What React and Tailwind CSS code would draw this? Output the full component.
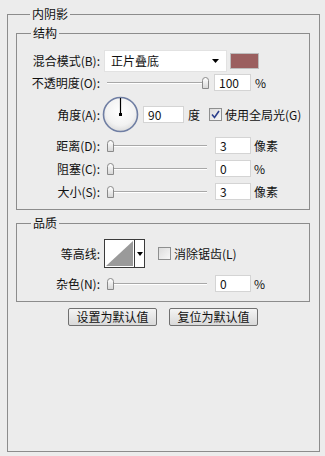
import React from "react";

function Label({ children }) {
  return <div className="w-[83px] shrink-0 text-right leading-[16px]">{children}</div>;
}

function NumBox({ value, w = "w-[37px]" }) {
  return (
    <div className={`${w} h-[17px] shrink-0 bg-white border border-[#d4d4d4] pl-[4px] leading-[15px] text-[12px]`}>
      {value}
    </div>
  );
}

function Slider({ pos }) {
  return (
    <div className="relative w-[104px] h-[14px] shrink-0">
      <div className="absolute left-0 right-[4px] top-[6px] h-[1px] bg-[#a8a8a8]" />
      <div className="absolute left-0 right-[4px] top-[7px] h-[1px] bg-[#ffffff]" />
      <div
        className={`absolute top-[1px] w-[7px] h-[12px] rounded-t-full rounded-b-[1px] border border-[#8a8a8a] bg-gradient-to-b from-[#ffffff] to-[#d8d8d8] ${
          pos === "end" ? "left-[95px]" : "left-0"
        }`}
      />
    </div>
  );
}

function SliderRow({ label, value, unit }) {
  return (
    <div className="flex items-center h-[17px]">
      <Label>{label}</Label>
      <div className="ml-[7px]">
        <Slider pos="start" />
      </div>
      <div className="ml-[4px]">
        <NumBox value={value} w="w-[36px]" />
      </div>
      <div className="ml-[3px] leading-[16px]">{unit}</div>
    </div>
  );
}

function Dial() {
  return (
    <svg width="37" height="37" viewBox="0 0 37 37">
      <defs>
        <radialGradient id="dg" cx="50%" cy="40%" r="60%">
          <stop offset="0%" stopColor="#ffffff" />
          <stop offset="70%" stopColor="#f2f2f2" />
          <stop offset="100%" stopColor="#dcdcdc" />
        </radialGradient>
      </defs>
      <circle cx="18.5" cy="18.5" r="17" fill="url(#dg)" stroke="#6f7ea3" strokeWidth="1.6" />
      <line x1="18.5" y1="2" x2="18.5" y2="18.5" stroke="#000" strokeWidth="1.2" />
      <rect x="17" y="17" width="3" height="3" fill="#000" />
    </svg>
  );
}

function Checkbox({ checked }) {
  return (
    <div className="w-[13px] h-[13px] shrink-0 border border-[#8e8f8f] bg-gradient-to-br from-[#dcdcdc] to-[#f8f8f8] flex items-center justify-center">
      {checked && (
        <svg width="11" height="11" viewBox="0 0 11 11">
          <path d="M2 5.5 L4.5 8.5 L9 2" fill="none" stroke="#2b3f8c" strokeWidth="1.6" />
        </svg>
      )}
    </div>
  );
}

function Contour() {
  return (
    <div className="flex w-[41px] h-[29px] shrink-0 border border-[#3a3a3a] bg-white">
      <svg width="29" height="27" viewBox="0 0 29 27" className="shrink-0">
        <polygon points="1,26 28,1 28,26" fill="#9a9a9a" />
      </svg>
      <div className="w-[1px] bg-[#3a3a3a]" />
      <div className="flex-1 flex items-center justify-center">
        <svg width="6" height="4" viewBox="0 0 6 4">
          <polygon points="0,0 6,0 3,4" fill="#000" />
        </svg>
      </div>
    </div>
  );
}

function Button({ children }) {
  return (
    <div className="w-[89px] h-[18px] rounded-[2px] border border-[#707070] bg-gradient-to-b from-[#f4f4f4] to-[#d9d9d9] flex items-center justify-center text-[12px] leading-[16px]">
      {children}
    </div>
  );
}

export default function App() {
  return (
    <div className="w-[325px] h-[456px] bg-[#ececec] text-[12px] text-[#111] font-['Noto_Sans_CJK_SC',sans-serif] pt-[6px] pl-[7px] overflow-hidden">
      <fieldset className="w-[313px] h-[446px] border border-[#8c8c8c] pl-[8px] pr-[9px]">
        <legend className="ml-[14px] px-[2px] leading-[16px]">内阴影</legend>

        <fieldset className="mt-[3px] w-[294px] h-[185px] border border-[#8c8c8c]">
          <legend className="ml-[14px] px-[2px] leading-[16px]">结构</legend>

          <div className="mt-[9px] flex items-center h-[22px]">
            <Label>混合模式(B):</Label>
            <div className="ml-[4px] w-[123px] h-[22px] bg-white border border-[#e2e2e2] flex items-center pl-[6px] pr-[7px]">
              <span className="flex-1 leading-[16px]">正片叠底</span>
              <svg width="7" height="4" viewBox="0 0 7 4">
                <polygon points="0,0 7,0 3.5,4" fill="#000" />
              </svg>
            </div>
            <div className="ml-[3px] w-[29px] h-[16px] bg-[#9b5f5f] border border-[#bdbdbd]" />
          </div>

          <div className="mt-[2px] flex items-center h-[17px]">
            <Label>不透明度(O):</Label>
            <div className="ml-[7px]">
              <Slider pos="end" />
            </div>
            <div className="ml-[3px]">
              <NumBox value="100" />
            </div>
            <div className="ml-[4px] leading-[16px]">%</div>
          </div>

          <div className="mt-[5px] flex items-center h-[37px]">
            <Label>角度(A):</Label>
            <div className="ml-[2px]">
              <Dial />
            </div>
            <div className="ml-[4px]">
              <NumBox value="90" w="w-[41px]" />
            </div>
            <div className="ml-[4px] leading-[16px]">度</div>
            <div className="ml-[9px]">
              <Checkbox checked />
            </div>
            <div className="ml-[3px] leading-[16px]">使用全局光(G)</div>
          </div>

          <div className="mt-[4px] flex flex-col gap-[6px]">
            <SliderRow label="距离(D):" value="3" unit="像素" />
            <SliderRow label="阻塞(C):" value="0" unit="%" />
            <SliderRow label="大小(S):" value="3" unit="像素" />
          </div>
        </fieldset>

        <fieldset className="mt-[5px] w-[294px] h-[87px] border border-[#8c8c8c]">
          <legend className="ml-[14px] px-[2px] leading-[16px]">品质</legend>

          <div className="mt-[8px] flex items-center h-[29px]">
            <Label>等高线:</Label>
            <div className="ml-[4px]">
              <Contour />
            </div>
            <div className="ml-[13px]">
              <Checkbox />
            </div>
            <div className="ml-[3px] leading-[16px]">消除锯齿(L)</div>
          </div>

          <div className="mt-[7px]">
            <SliderRow label="杂色(N):" value="0" unit="%" />
          </div>
        </fieldset>

        <div className="mt-[6px] flex justify-center gap-[12px]">
          <Button>设置为默认值</Button>
          <Button>复位为默认值</Button>
        </div>
      </fieldset>
    </div>
  );
}
